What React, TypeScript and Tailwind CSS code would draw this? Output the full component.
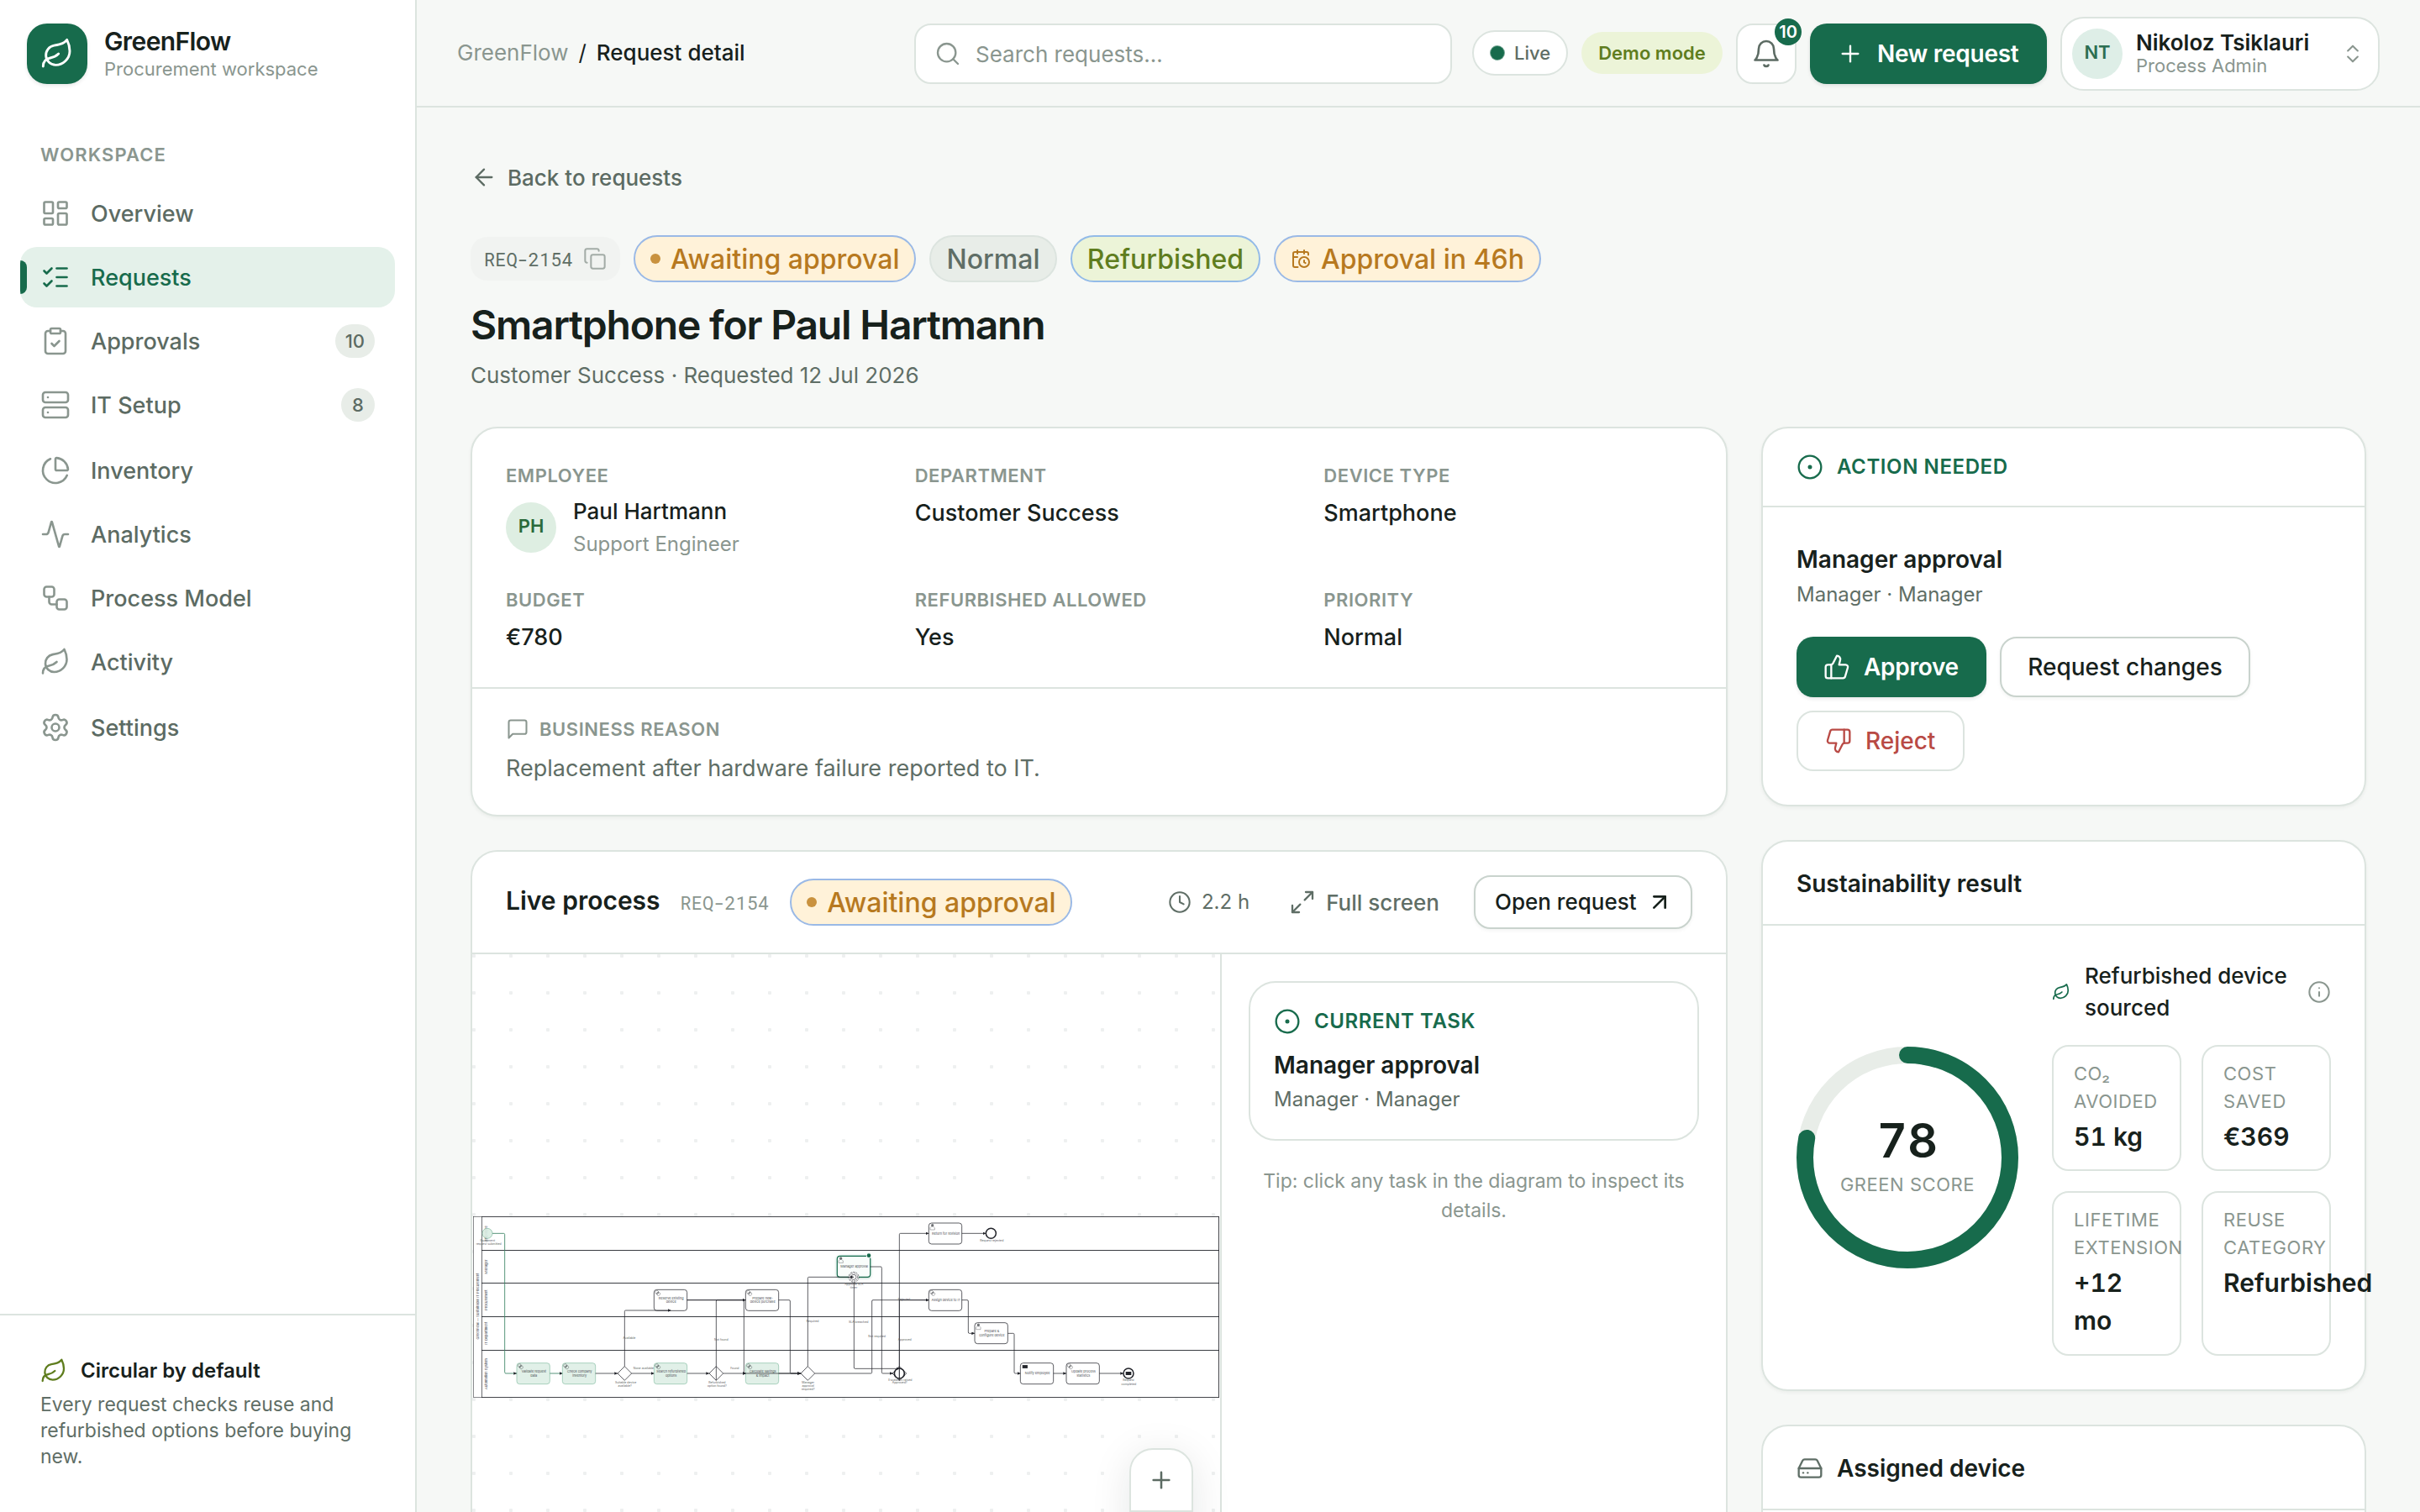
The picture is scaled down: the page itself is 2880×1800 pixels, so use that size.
import React from 'react';
import {
    Activity, ArrowLeft, ArrowUpRight, CalendarClock, ChartPie, ChevronsUpDown, CircleDot, ClipboardCheck, Clock, Copy,
    HardDrive, Info, LayoutDashboard, Leaf, ListChecks, Maximize2, Plus, Search, Server, Settings, ThumbsDown, ThumbsUp, Workflow,
} from 'lucide-react';

const navItems = [
    { label: 'Overview', icon: LayoutDashboard },
    { label: 'Requests', icon: ListChecks, active: true },
    { label: 'Approvals', icon: ClipboardCheck, count: 10 },
    { label: 'IT Setup', icon: Server, count: 8 },
    { label: 'Inventory', icon: ChartPie, spaced: true },
    { label: 'Analytics', icon: Activity },
    { label: 'Process Model', icon: Workflow },
    { label: 'Activity', icon: Leaf },
    { label: 'Settings', icon: Settings, spaced: true },
];

const BellIcon = () => (
    <svg width="36" height="36" viewBox="0 0 24 24" fill="none" stroke="currentColor" strokeWidth="1.75" strokeLinecap="round" strokeLinejoin="round">
        <path d="M6 8a6 6 0 0 1 12 0c0 7 3 9 3 9H3s3-2 3-9" />
        <path d="M10.3 21a1.94 1.94 0 0 0 3.4 0" />
    </svg>
);

const MessageIcon = () => (
    <svg width="28" height="28" viewBox="0 0 24 24" fill="none" stroke="currentColor" strokeWidth="1.75" strokeLinecap="round" strokeLinejoin="round">
        <path d="M21 15a2 2 0 0 1-2 2H7l-4 4V5a2 2 0 0 1 2-2h14a2 2 0 0 1 2 2z" />
    </svg>
);

const Sidebar = () => (
    <aside className="w-[496px] shrink-0 flex flex-col bg-white border-r-2 border-[#dce4df]">
        <div className="pt-7 px-8 flex items-center gap-5">
            <div className="w-[72px] h-[72px] rounded-[24px] bg-[#176b4c] text-white flex items-center justify-center shadow-[0_2px_4px_rgba(23,33,28,0.1)]">
                <Leaf size={40} strokeWidth={1.75} />
            </div>
            <div className="whitespace-nowrap">
                <p className="mb-1 text-[30px] leading-[32px] font-semibold tracking-[-0.02em] text-[#17211c]">GreenFlow</p>
                <p className="text-[22px] leading-[26px] text-[#8a968f]">Procurement workspace</p>
            </div>
        </div>

        <p className="mt-[67px] px-12 text-[22px] leading-[34px] font-semibold tracking-wider text-[#8a968f]">WORKSPACE</p>

        <nav className="mt-[17px] px-6 flex flex-col gap-1">
            {navItems.map(({ label, icon: Icon, active, count, spaced }) => (
                <div
                    key={label}
                    className={`relative h-[72px] px-6 flex items-center gap-6 rounded-[20px] overflow-hidden ${active ? 'bg-[#e4f1ea] text-[#176b4c]' : 'text-[#5c6b63]'} ${spaced ? 'mt-0.5' : ''}`}
                >
                    {active && <span className="absolute left-0 top-4 w-2 h-10 rounded-r-full bg-[#176b4c]"></span>}
                    <Icon size={36} strokeWidth={1.75} className={active ? 'text-[#176b4c]' : 'text-[#8a968f]'} />
                    <span className="mt-0.5 text-[27px] font-medium">{label}</span>
                    {count && (
                        <span className="ml-auto min-w-10 h-10 px-3 rounded-full bg-[#e8ede8] text-[22px] font-medium flex items-center justify-center">
                            {count}
                        </span>
                    )}
                </div>
            ))}
        </nav>

        <div className="mt-auto h-[236px] border-t-2 border-[#dce4df] px-12 pt-12">
            <div className="flex items-center gap-4 h-9">
                <Leaf size={32} strokeWidth={1.75} className="text-[#5f7d1e]" />
                <span className="text-[24px] font-semibold text-[#17211c]">Circular by default</span>
            </div>
            <p className="mt-[7px] text-[23px] leading-[31px] text-[#5f6e66]">
                Every request checks reuse and refurbished options before buying new.
            </p>
        </div>
    </aside>
);

const TopBar = () => (
    <header className="h-[128px] shrink-0 border-b-2 border-[#dce4df] pt-0.5 px-12 flex items-center whitespace-nowrap">
        <div className="flex items-center gap-3 text-[26px] mb-1">
            <span className="text-[#8a968f]">GreenFlow</span>
            <span className="text-[#17211c]">/</span>
            <span className="font-medium text-[#17211c]">Request detail</span>
        </div>
        <div className="ml-auto w-[640px] h-[72px] rounded-[20px] border-2 border-[#dce4df] bg-white pl-[22px] flex items-center gap-[17px] text-[#8a968f]">
            <Search size={32} strokeWidth={1.75} />
            <span className="text-[26px]">Search requests…</span>
        </div>
        <div className="ml-6 mb-0.5 w-[114px] h-[54px] rounded-full border-2 border-[#dce4df] bg-white pl-5 flex items-center gap-3 text-[22px] font-medium text-[#5f6e66]">
            <span className="w-4 h-4 rounded-full bg-[#176b4c] ring-1 ring-[#176b4c]/60"></span>
            Live
        </div>
        <div className="ml-4 mb-0.5 w-[168px] h-[50px] rounded-full bg-[#ecf4d8] flex items-center justify-center text-[22px] font-semibold text-[#5f7d1e]">
            Demo mode
        </div>
        <div className="relative ml-4 w-[72px] h-[72px] rounded-[20px] border-2 border-[#dce4df] bg-white flex items-center justify-center text-[#5c6b63]">
            <BellIcon />
            <span className="absolute -top-2 -right-2 w-8 h-8 rounded-full bg-[#176b4c] text-white text-[20px] font-semibold flex items-center justify-center">10</span>
        </div>
        <div className="ml-4 w-[282px] h-[72px] rounded-[20px] bg-[#176b4c] text-white pl-8 flex items-center gap-4 text-[28px] font-semibold tracking-[-0.01em] shadow-[0_2px_4px_rgba(23,33,28,0.1)]">
            <Plus size={32} strokeWidth={1.75} />
            New request
        </div>
        <div className="ml-4 w-[380px] h-[88px] rounded-[28px] border-2 border-[#dce4df] bg-white pl-3 pr-4 flex items-center gap-4">
            <span className="w-[60px] h-[60px] pb-1 rounded-full bg-[#deeee7] text-[#2c6e52] text-[22px] font-semibold flex items-center justify-center">NT</span>
            <div>
                <p className="text-[26px] leading-[28px] font-semibold text-[#17211c]">Nikoloz Tsiklauri</p>
                <p className="text-[22px] leading-[26px] text-[#8a968f]">Process Admin</p>
            </div>
            <ChevronsUpDown size={28} strokeWidth={1.75} className="ml-auto text-[#8a968f]" />
        </div>
    </header>
);

const AwaitingBadge = () => (
    <span className="w-[336px] h-14 shrink-0 rounded-full border-2 border-[#9ab9e6] bg-[#fff2d9] pl-[18px] flex items-center gap-3 text-[32px] font-medium text-[#b7791f]">
        <span className="w-3 h-3 rounded-full bg-[#c9923f]"></span>
        <span className="mt-0.5">Awaiting approval</span>
    </span>
);

const PageHeading = () => (
    <div className="whitespace-nowrap">
        <div className="flex items-center gap-3 h-10 text-[26px] font-medium text-[#5c6b63]">
            <ArrowLeft size={32} strokeWidth={1.75} />
            Back to requests
        </div>
        <div className="mt-[49px] h-14 flex items-center gap-4">
            <span className="w-[178px] h-[52px] rounded-[20px] bg-[#f1f3f1] pl-4 flex items-center gap-3 font-['Roboto_Mono','Liberation_Mono',monospace] text-[22px] text-[#5f6e66]">
                REQ-2154
                <Copy size={28} strokeWidth={1.75} className="text-[#a3aca7]" />
            </span>
            <AwaitingBadge />
            <span className="w-[152px] h-14 pt-0.5 rounded-full border-2 border-[#dce4df] bg-[#e8ede8] flex items-center justify-center text-[32px] font-medium text-[#5f6e66]">Normal</span>
            <span className="w-[226px] h-14 pt-0.5 rounded-full border-2 border-[#93bbe8] bg-[#ecf4d8] flex items-center justify-center text-[32px] font-medium text-[#5f7d1e]">Refurbished</span>
            <span className="w-[318px] h-14 rounded-full border-2 border-[#9ab9e6] bg-[#fff2d9] pl-[18px] flex items-center gap-3 text-[32px] font-medium text-[#b7791f]">
                <CalendarClock size={24} strokeWidth={2} />
                <span className="mt-0.5">Approval in 46h</span>
            </span>
        </div>
        <h1 className="mt-[21px] text-[48px] leading-[60px] font-semibold tracking-tight text-[#17211c]">Smartphone for Paul Hartmann</h1>
        <p className="mt-2.5 text-[26px] leading-[40px] text-[#5f6e66]">Customer Success · Requested 12 Jul 2026</p>
    </div>
);

const Field = ({ label, children }: { label: string; children: React.ReactNode }) => (
    <div>
        <p className="text-[22px] leading-[34px] font-semibold tracking-wide text-[#8a968f]">{label}</p>
        {children}
    </div>
);

const fieldValue = 'mt-2 text-[27px] leading-[40px] font-medium text-[#17211c]';

const DetailsCard = () => (
    <section className="h-[464px] rounded-[32px] border-2 border-[#dce4df] bg-white shadow-[0_2px_4px_rgba(23,33,28,0.05)]">
        <div className="h-[308px] pt-[39px] px-10 grid grid-cols-3 content-start gap-x-12 gap-y-[30px]">
            <Field label="EMPLOYEE">
                <div className="mt-1.5 flex items-center gap-5">
                    <span className="w-[60px] h-[60px] pb-1 rounded-full bg-[#deeee2] text-[#2a6a3b] text-[22px] font-semibold flex items-center justify-center">PH</span>
                    <div>
                        <p className="text-[26px] leading-[40px] font-medium text-[#17211c]">Paul Hartmann</p>
                        <p className="text-[24px] leading-[38px] text-[#8a968f]">Support Engineer</p>
                    </div>
                </div>
            </Field>
            <Field label="DEPARTMENT"><p className={fieldValue}>Customer Success</p></Field>
            <Field label="DEVICE TYPE"><p className={fieldValue}>Smartphone</p></Field>
            <Field label="BUDGET"><p className={fieldValue}>€780</p></Field>
            <Field label="REFURBISHED ALLOWED"><p className={fieldValue}>Yes</p></Field>
            <Field label="PRIORITY"><p className={fieldValue}>Normal</p></Field>
        </div>
        <div className="border-t-2 border-[#dce4df] pt-[31px] px-10">
            <div className="flex items-center gap-3 text-[22px] leading-[34px] font-semibold tracking-wide text-[#8a968f]">
                <MessageIcon />
                BUSINESS REASON
            </div>
            <p className="mt-2.5 text-[27px] leading-[40px] text-[#5f6e66]">Replacement after hardware failure reported to IT.</p>
        </div>
    </section>
);

const lanes = [
    { name: 'Employee', y: 85, h: 120 },
    { name: 'Manager', y: 205, h: 118 },
    { name: 'Procurement', y: 323, h: 119 },
    { name: 'IT Department', y: 442, h: 120 },
    { name: 'Automation System', y: 562, h: 169 },
];

const tasks = [
    { x: 195, y: 608, lines: ['Validate request', 'data'], kind: 'service', done: true },
    { x: 358, y: 608, lines: ['Check company', 'inventory'], kind: 'service', done: true },
    { x: 685, y: 608, lines: ['Search refurbished', 'options'], kind: 'service', done: true },
    { x: 1012, y: 608, lines: ['Calculate savings', '& impact'], kind: 'service', done: true },
    { x: 685, y: 346, lines: ['Reserve existing', 'device'], kind: 'service' },
    { x: 1012, y: 346, lines: ['Prepare new-', 'device purchase'], kind: 'service' },
    { x: 1339, y: 226, lines: ['Manager approval'], kind: 'user', current: true },
    { x: 1666, y: 108, lines: ['Return for revision'], kind: 'user' },
    { x: 1666, y: 346, lines: ['Assign device to IT'], kind: 'service' },
    { x: 1830, y: 464, lines: ['Prepare &', 'configure device'], kind: 'user' },
    { x: 1993, y: 608, lines: ['Notify employee'], kind: 'send' },
    { x: 2157, y: 608, lines: ['Update process', 'statistics'], kind: 'service' },
];

const flows = [
    'M476 645H555', 'M605 645H685', 'M803 645H882', 'M932 645H1012', 'M1130 645H1209',
    'M580 620V424Q580 420 584 420H745',
    'M803 383H1012',
    'M803 383H1002Q1006 383 1006 387V645H1012',
    'M907 670V387Q907 383 911 383H1012',
    'M1130 383H1167Q1171 383 1171 387V641Q1171 645 1175 645H1209',
    'M1006 645H1209',
    'M1234 620V305Q1234 301 1238 301H1398',
    'M1259 645H1459Q1463 645 1463 641V387Q1463 383 1467 383H1666',
    'M1457 264H1494Q1498 264 1498 268V641Q1498 645 1502 645H1538',
    'M1399 320V624Q1399 628 1403 628H1561',
    'M1561 670V149Q1561 145 1565 145H1666',
    'M1561 670V383H1666',
    'M1784 145H1870',
    'M1784 383H1803Q1807 383 1807 387V498Q1807 502 1811 502H1830',
    'M1948 502H1967Q1971 502 1971 506V641Q1971 645 1975 645H1993',
    'M2111 645H2157', 'M2275 645H2361',
];

const flowLabels: [string, number, number][] = [
    ['Equipment', 91, 174], ['request submitted', 95, 186],
    ['Available', 597, 522], ['None available', 648, 630], ['Suitable device', 584, 681], ['available?', 581, 692],
    ['Not found', 925, 528], ['Found', 973, 630], ['Refurbished', 910, 681], ['option found?', 910, 692],
    ['Required', 1251, 462], ['Manager', 1235, 681], ['approval', 1235, 692], ['required?', 1235, 704],
    ['Approval SLA', 1399, 330], ['timer', 1398, 342], ['SLA breached', 1415, 465], ['Not required', 1481, 516],
    ['Rejected', 1578, 384], ['Approved', 1580, 528], ['Escalation raised', 1564, 672], ['Approved?', 1562, 682],
    ['Request rejected', 1891, 174], ['Request', 2379, 672], ['completed', 2380, 687],
];

const TaskMarker = ({ x, y, kind }: { x: number; y: number; kind: string }) => {
    if (kind === 'send') return <path d={`M${x + 7} ${y + 7}h19v12h-19z`} fill="#22242a" stroke="#fff" strokeWidth="0.6" />;
    if (kind === 'user') {
        return (
            <g fill="none" stroke="#22242a" strokeWidth="1">
                <circle cx={x + 13} cy={y + 8} r="4" fill="#22242a" fillOpacity="0.6" />
                <path d={`M${x + 5} ${y + 24}v-7l5-5h6l5 5v7z`} />
            </g>
        );
    }
    return (
        <g fill="none" stroke="#22242a" strokeWidth="1.6" strokeDasharray="2.4 1">
            <circle cx={x + 10} cy={y + 9} r="6" />
            <circle cx={x + 16} cy={y + 15} r="6" />
            <circle cx={x + 13} cy={y + 12} r="2.5" />
        </g>
    );
};

const ProcessDiagram = () => (
    <svg className="block mt-[284px] w-[890px] h-[260px]" viewBox="36 0 2670 780" fontFamily="Inter, sans-serif" fontSize="11.5">
        <defs>
            <marker id="arrow" viewBox="0 0 10 10" refX="10" refY="5" markerWidth="11" markerHeight="11" markerUnits="userSpaceOnUse" orient="auto">
                <path d="M0 0L10 5L0 10z" fill="#22242a" />
            </marker>
            <filter id="glow" x="-20%" y="-20%" width="140%" height="150%">
                <feDropShadow dx="0" dy="2" stdDeviation="5" floodColor="#176b4c" floodOpacity="0.35" />
            </filter>
        </defs>
        <rect x="40" y="85" width="2662" height="646" fill="#fff" stroke="#22242a" strokeWidth="1.6" />
        {lanes.map((lane) => (
            <g key={lane.name}>
                <rect x="70" y={lane.y} width="2632" height={lane.h} fill="none" stroke="#22242a" strokeWidth="2" />
                <text transform={`translate(90 ${lane.y + lane.h / 2}) rotate(-90)`} textAnchor="middle" fill="#4a4d52" fontSize="12">{lane.name}</text>
            </g>
        ))}
        <text transform="translate(60 405) rotate(-90)" textAnchor="middle" fill="#4a4d52" fontSize="12">GreenFlow — Sustainable IT Procurement</text>

        <circle cx="90" cy="145" r="18" fill="#d9ece2" fillOpacity="0.9" stroke="#7fb79d" strokeWidth="2" />
        {tasks.map((t) => (
            <g key={t.lines.join()}>
                <rect
                    x={t.x} y={t.y} width="118" height="75" rx="10"
                    fill={t.done ? '#e1f0e8' : t.current ? '#f9fdfb' : '#fff'}
                    stroke={t.current ? '#176b4c' : t.done ? '#8fc3aa' : '#22242a'}
                    strokeWidth={t.current ? 3.4 : 2.2}
                    filter={t.current ? 'url(#glow)' : undefined}
                />
                <TaskMarker x={t.x} y={t.y} kind={t.kind} />
                {t.lines.map((line, i) => (
                    <text key={line} x={t.x + 61} y={t.y + (t.lines.length === 1 ? 41 : 34 + i * 14)} textAnchor="middle" fill="#4a4d52">{line}</text>
                ))}
            </g>
        ))}
        {[580, 907, 1234, 1561].map((cx) => (
            <path key={cx} d={`M${cx} 620l25 25l-25 25l-25 -25z`} fill="#fff" stroke="#22242a" strokeWidth="2.2" />
        ))}
        <circle cx="1561" cy="645" r="18" fill="#fff" fillOpacity="0.9" stroke="#22242a" strokeWidth="5" />
        <circle cx="1888" cy="145" r="18" fill="#fff" stroke="#22242a" strokeWidth="4.5" />
        <circle cx="2379" cy="645" r="18" fill="#fff" stroke="#22242a" strokeWidth="4.5" />
        <path d="M2369 639h20v12h-20z" fill="#22242a" />
        <g fill="none" stroke="#22242a" strokeWidth="1.8">
            <circle cx="1398" cy="301" r="18" fill="#fff" strokeDasharray="7 3" />
            <circle cx="1398" cy="301" r="14" strokeDasharray="5 3" />
            <circle cx="1398" cy="301" r="9" />
        </g>
        <g fill="none" stroke="#3d8566" strokeWidth="2.6">
            <path d="M108 145H148Q152 145 152 149V641Q152 645 156 645H195" markerEnd="url(#arrow)" />
            <path d="M313 645H358" markerEnd="url(#arrow)" />
        </g>
        <g fill="none" stroke="#22242a" strokeWidth="2.2">
            {flows.map((d) => <path key={d} d={d} markerEnd="url(#arrow)" />)}
        </g>
        <g fill="#5a5d62" textAnchor="middle" fontSize="10.5">
            {flowLabels.map(([label, x, y]) => <text key={`${label}${x}`} x={x} y={y}>{label}</text>)}
        </g>
        <circle cx="1452" cy="224" r="9.5" fill="#fff" />
        <circle cx="1452" cy="224" r="7" fill="#176b4c" />
    </svg>
);

const LiveProcessCard = () => (
    <section className="mt-10 h-[900px] rounded-[32px] border-2 border-[#dce4df] bg-white flex flex-col">
        <div className="h-[122px] shrink-0 border-b-2 border-[#dce4df] px-10 flex items-center whitespace-nowrap">
            <h2 className="text-[30px] font-semibold text-[#17211c] mb-1">Live process</h2>
            <span className="ml-6 font-['Roboto_Mono','Liberation_Mono',monospace] text-[22px] text-[#8a968f]">REQ-2154</span>
            <div className="ml-[25px]"><AwaitingBadge /></div>
            <div className="ml-auto flex items-center gap-3 text-[24px] text-[#5f6e66]">
                <Clock size={28} strokeWidth={1.75} />
                2.2 h
            </div>
            <div className="ml-[47px] flex items-center gap-3 text-[26px] font-medium text-[#5f6e66]">
                <Maximize2 size={32} strokeWidth={1.75} />
                Full screen
            </div>
            <div className="ml-[41px] w-[260px] h-16 rounded-[20px] border-2 border-[#c9d3cd] bg-white pl-[23px] flex items-center gap-[11px] text-[26px] font-medium text-[#17211c] shadow-[0_2px_4px_rgba(23,33,28,0.05)]">
                <span className="mb-0.5">Open request</span>
                <ArrowUpRight size={32} strokeWidth={2} />
            </div>
        </div>
        <div className="flex-1 flex">
            <div className="relative w-[890px] bg-[radial-gradient(circle_at_2px_2px,#eef0f0_2px,transparent_2.5px)] bg-[size:44px_44px]">
                <ProcessDiagram />
                <div className="absolute right-8 top-[588px] w-[76px] h-[226px] rounded-[28px] border-2 border-[#dce4df] bg-white shadow-[0_8px_48px_rgba(23,33,28,0.1)]">
                    <div className="h-[74px] border-b-2 border-[#dce4df] flex items-center justify-center text-[#5c6b63]">
                        <Plus size={32} strokeWidth={1.9} />
                    </div>
                </div>
            </div>
            <div className="flex-1 border-l-2 border-[#dce4df] p-8">
                <div className="h-[190px] rounded-[32px] border-2 border-[#dce4df] px-7 pt-[27px]">
                    <div className="flex items-center gap-4 text-[24px] leading-[38px] font-semibold tracking-wide text-[#176b4c]">
                        <CircleDot size={32} strokeWidth={1.75} />
                        CURRENT TASK
                    </div>
                    <p className="mt-3 text-[28px] leading-[42px] font-semibold text-[#17211c]">Manager approval</p>
                    <p className="mt-0.5 text-[24px] leading-[36px] text-[#5f6e66]">Manager · Manager</p>
                </div>
                <p className="mt-[31px] text-center text-[23px] leading-[34.5px] text-[#8a968f]">
                    Tip: click any task in the diagram to inspect its details.
                </p>
            </div>
        </div>
    </section>
);

const ActionCard = () => (
    <section className="h-[452px] rounded-[32px] border-2 border-[#dce4df] bg-white shadow-[0_2px_4px_rgba(23,33,28,0.05)]">
        <div className="h-[94px] border-b-2 border-[#dce4df] px-10 flex items-center gap-4 text-[24px] font-semibold tracking-wide text-[#176b4c]">
            <CircleDot size={32} strokeWidth={1.75} />
            ACTION NEEDED
        </div>
        <div className="px-10 pt-[41px]">
            <p className="text-[28px] leading-[42px] font-semibold text-[#17211c]">Manager approval</p>
            <p className="mt-[3px] text-[24px] leading-[36px] text-[#5f6e66]">Manager · Manager</p>
            <div className="mt-8 flex flex-wrap gap-4 text-[28px] font-medium">
                <span className="w-[226px] h-[72px] rounded-[20px] bg-[#176b4c] text-white font-semibold tracking-[-0.01em] pl-8 flex items-center gap-4 shadow-[0_2px_4px_rgba(23,33,28,0.1)]">
                    <ThumbsUp size={32} strokeWidth={1.75} />
                    Approve
                </span>
                <span className="w-[298px] h-[72px] rounded-[20px] border-2 border-[#c9d3cd] bg-white text-[#17211c] flex items-center justify-center shadow-[0_2px_4px_rgba(23,33,28,0.05)]">
                    Request changes
                </span>
                <span className="w-[200px] h-[72px] rounded-[20px] border-2 border-[#dce4df] text-[#b94a45] pl-8 flex items-center gap-4">
                    <ThumbsDown size={32} strokeWidth={1.75} />
                    Reject
                </span>
            </div>
        </div>
    </section>
);

const ScoreRing = ({ score }: { score: number }) => {
    const length = 2 * Math.PI * 122;
    return (
        <div className="relative w-[264px] h-[264px] shrink-0">
            <svg width="264" height="264" viewBox="0 0 264 264" fill="none" strokeWidth="20" className="-rotate-90">
                <circle cx="132" cy="132" r="122" stroke="#e8ede8" />
                <circle cx="132" cy="132" r="122" stroke="#176b4c" strokeLinecap="round" strokeDasharray={`${(length * score) / 100} ${length}`} />
            </svg>
            <div className="absolute inset-0 flex flex-col items-center pt-[84px]">
                <span className="text-[56px] leading-[56px] font-semibold tabular-nums text-[#17211c]">{score}</span>
                <span className="mt-2 text-[22px] leading-[33px] tracking-wide text-[#8a968f]">GREEN SCORE</span>
            </div>
        </div>
    );
};

const metrics = [
    { label: 'CO₂ AVOIDED', value: '51 kg' },
    { label: 'COST SAVED', value: '€369' },
    { label: 'LIFETIME EXTENSION', value: '+12 mo' },
    { label: 'REUSE CATEGORY', value: 'Refurbished' },
];

const SustainabilityCard = () => (
    <section className="mt-10 h-[656px] rounded-[32px] border-2 border-[#dce4df] bg-white shadow-[0_2px_4px_rgba(23,33,28,0.05)]">
        <div className="h-[100px] border-b-2 border-[#dce4df] px-10 pt-0.5 flex items-center">
            <h2 className="text-[28px] font-semibold text-[#17211c]">Sustainability result</h2>
        </div>
        <div className="p-10 flex items-center gap-10">
            <ScoreRing score={78} />
            <div className="w-[332px]">
                <div className="h-[78px] flex items-center gap-4">
                    <Leaf size={22} strokeWidth={1.9} className="shrink-0 text-[#176b4c]" />
                    <p className="flex-1 pl-px text-[26px] leading-[38px] font-medium text-[#17211c]">Refurbished device sourced</p>
                    <Info size={28} strokeWidth={1.75} className="shrink-0 text-[#8a968f]" />
                </div>
                <div className="mt-6 grid grid-cols-2 grid-rows-[150px_196px] gap-6">
                    {metrics.map((m) => (
                        <div key={m.label} className="min-w-0 rounded-[20px] border-2 border-[#dce4df] px-6 pt-4">
                            <p className="text-[22px] leading-[33px] tracking-wide text-[#8a968f]">{m.label}</p>
                            <p className="mt-[3px] text-[30px] leading-[45px] font-semibold tabular-nums text-[#17211c]">{m.value}</p>
                        </div>
                    ))}
                </div>
            </div>
        </div>
    </section>
);

const DeviceCard = () => (
    <section className="mt-10 h-[400px] rounded-[32px] border-2 border-[#dce4df] bg-white">
        <div className="h-[100px] border-b-2 border-[#dce4df] px-10 pt-0.5 flex items-center gap-4">
            <HardDrive size={32} strokeWidth={1.75} className="text-[#5f6e66]" />
            <h2 className="text-[28px] font-semibold text-[#17211c]">Assigned device</h2>
        </div>
    </section>
);

export default function App() {
    return (
        <div className="w-[2880px] h-[1800px] overflow-hidden flex bg-[#f6f8f6] font-[Inter,sans-serif]">
            <Sidebar />
            <div className="flex-1 flex flex-col">
                <TopBar />
                <main className="flex-1 min-h-0 px-16 pt-[63px] overflow-hidden">
                    <PageHeading />
                    <div className="mt-[41px] flex gap-10">
                        <div className="w-[1496px] shrink-0">
                            <DetailsCard />
                            <LiveProcessCard />
                        </div>
                        <div className="w-[720px] shrink-0">
                            <ActionCard />
                            <SustainabilityCard />
                            <DeviceCard />
                        </div>
                    </div>
                </main>
            </div>
        </div>
    );
}
